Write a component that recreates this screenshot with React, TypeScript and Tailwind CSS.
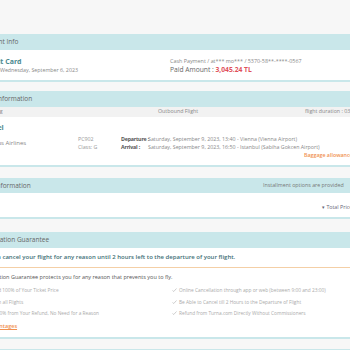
import React from "react";

function Check() {
  return (
    <svg width="5" height="4" viewBox="0 0 10 8" className="shrink-0">
      <path d="M1 5 L3.5 7 L9 1" fill="none" stroke="#b8b8b8" strokeWidth="1.4" />
    </svg>
  );
}

export default function App() {
  return (
    <div className="w-[350px] h-[350px] overflow-hidden bg-[#f7f7f7] font-[family-name:'Open_Sans',sans-serif]">
      <div className="-ml-[34px] w-[430px] pt-[34px] flex flex-col">
        {/* Payment Info */}
        <section className="bg-white border-b-2 border-[#c9e7ea]">
          <div className="h-[16px] bg-[#c9e7ea] px-[12px] flex items-center text-[6.5px] text-[#666]">Payment Info</div>
          <div className="h-[30px] px-[12px] flex items-center">
            <div className="w-[192px] flex flex-col gap-[1px]">
              <div className="pl-[4px] text-[7px] leading-[9px] font-bold text-[#4b8990]">Credit Card</div>
              <div className="pl-[22px] text-[5.3px] leading-[7px] text-[#888]">Wednesday, September 6, 2023</div>
            </div>
            <div className="flex flex-col gap-[1px]">
              <div className="text-[5.4px] leading-[8px] text-[#888]">Cash Payment / at*** mo*** / 5370-58**-****-0567</div>
              <div className="text-[6.7px] leading-[8px] text-[#666]">
                Paid Amount : <span className="font-bold text-[#e0505a]">3,045.24 TL</span>
              </div>
            </div>
          </div>
        </section>

        {/* Flight Information */}
        <section className="mt-[9px] bg-white border-b-2 border-[#c9e7ea]">
          <div className="h-[16px] bg-[#c9e7ea] px-[12px] flex items-center text-[6.5px] text-[#666]">Flight Information</div>
          <div className="h-[10px] bg-[#f2f2f2] px-[12px] flex items-center text-[5.3px] text-[#888]">
            <div className="w-[180px]">Departing</div>
            <div className="w-[147px]">Outbound Flight</div>
            <div className="whitespace-nowrap">flight duration : 03h 10m</div>
          </div>
          <div className="h-[48px] px-[12px] flex flex-col">
            <div className="mt-[6px] pl-[4px] text-[7px] leading-[9px] font-bold text-[#4b8990]">Travel</div>
            <div className="mt-[3px] flex items-center">
              <div className="w-[100px] pl-[3px] text-[6px] text-[#888] whitespace-nowrap">Pegasus Airlines</div>
              <div className="w-[43px] flex flex-col text-[5.3px] leading-[8px] text-[#999]">
                <div>PC902</div>
                <div>Class: G</div>
              </div>
              <div className="flex flex-col text-[5.3px] leading-[8px] text-[#888] whitespace-nowrap">
                <div className="flex">
                  <span className="w-[27px] shrink-0 font-bold tracking-[-0.2px] text-[#555]">Departure :</span>
                  <span>Saturday, September 9, 2023, 13:40 - Vienna (Vienna Airport)</span>
                </div>
                <div className="flex">
                  <span className="w-[27px] shrink-0 font-bold tracking-[-0.2px] text-[#555]">Arrival :</span>
                  <span>Saturday, September 9, 2023, 16:50 - Istanbul (Sabiha Gokcen Airport)</span>
                </div>
              </div>
            </div>
            <div className="mt-[1px] pl-[326px] text-[5.3px] font-semibold text-[#f09050] whitespace-nowrap">Baggage allowance</div>
          </div>
        </section>

        {/* Price Information */}
        <section className="mt-[11px] bg-white border-b-2 border-[#c9e7ea]">
          <div className="h-[15px] bg-[#c9e7ea] px-[12px] flex items-center text-[6.5px] text-[#666]">
            <div className="w-[285px]">Price Information</div>
            <div className="text-[5.3px] text-[#777] whitespace-nowrap">Installment options are provided</div>
          </div>
          <div className="h-[24px] px-[12px] flex items-center">
            <div className="pl-[344px] mt-[6px] text-[5.3px] text-[#667] whitespace-nowrap">▾ Total Price</div>
          </div>
        </section>

        {/* Cancellation Guarantee */}
        <section className="mt-[13px] bg-white border-b-2 border-[#c9e7ea]">
          <div className="h-[16px] bg-[#c9e7ea] px-[12px] flex items-center text-[6.5px] text-[#666]">Cancellation Guarantee</div>
          <div className="px-[12px] pt-[5px] pb-[7px] flex flex-col">
            <div className="text-[6px] leading-[8px] font-semibold text-[#3e6f76] whitespace-nowrap">
              You can cancel your flight for any reason until 2 hours left to the departure of your flight.
            </div>
            <div className="mt-[6px] h-px bg-[#f4cfa6]"></div>
            <div className="mt-[5px] text-[5.5px] leading-[8px] text-[#555] whitespace-nowrap">
              Cancellation Guarantee protects you for any reason that prevents you to fly.
            </div>
            <div className="mt-[5px] grid grid-cols-[194px_1fr] gap-y-[3.5px] text-[4.8px] leading-[8px] text-[#aaa] whitespace-nowrap">
              <div className="flex items-center gap-[2px]"><Check />Refund 100% of Your Ticket Price</div>
              <div className="flex items-center gap-[2px]"><Check />Online Cancellation through app or web (between 9:00 and 23:00)</div>
              <div className="flex items-center gap-[2px]"><Check />Valid in all Flights</div>
              <div className="flex items-center gap-[2px]"><Check />Be Able to Cancel till 2 Hours to the Departure of Flight</div>
              <div className="flex items-center gap-[2px]"><Check />Get 100% from Your Refund, No Need for a Reason</div>
              <div className="flex items-center gap-[2px]"><Check />Refund from Turna.com Directly Without Commissioners</div>
            </div>
            <div className="mt-[5px] text-[5.5px] leading-[8px] font-semibold text-[#f09050] underline whitespace-nowrap">All Advantages</div>
          </div>
        </section>

        <section className="mt-[10px] bg-white">
          <div className="h-[16px] bg-[#c9e7ea] px-[12px]"></div>
        </section>
      </div>
    </div>
  );
}
